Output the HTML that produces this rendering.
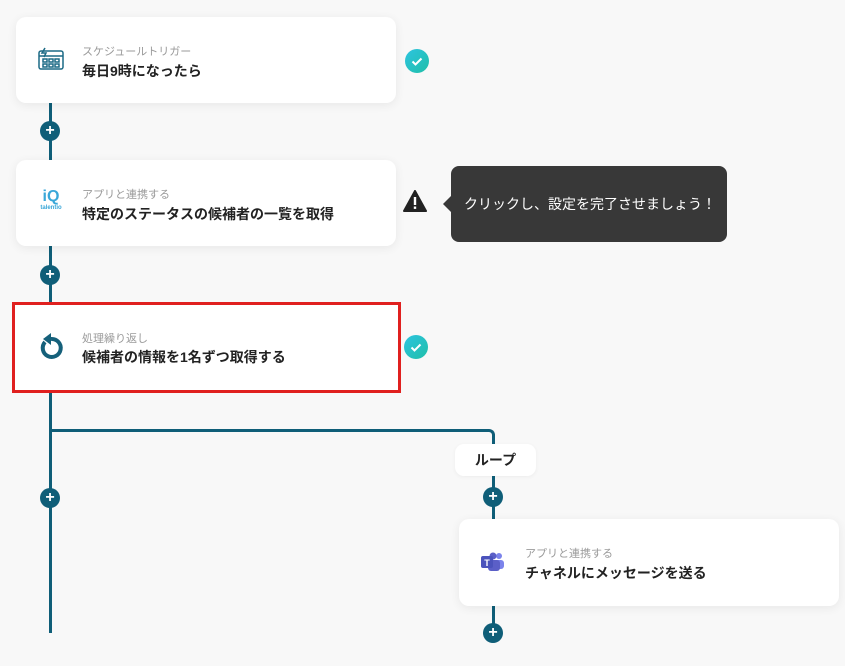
<!DOCTYPE html>
<html><head><meta charset="utf-8"><style>
*{margin:0;padding:0;box-sizing:border-box}
body{width:845px;height:666px;background:#f8f8f8;position:relative;overflow:hidden;font-family:"Liberation Sans","Noto Sans CJK JP",sans-serif}
.ln{position:absolute;background:#0f5e78}
.card{position:absolute;background:#fff;border-radius:10px;box-shadow:0 2px 10px rgba(0,0,0,.07)}
.sub{position:absolute;font-size:11px;color:#9a9a9a}
.ttl{position:absolute;font-size:14px;font-weight:bold;color:#222}
.plus{position:absolute;width:20px;height:20px;border-radius:50%;background:#0f5e78;color:#fff;font-weight:bold;font-size:16px;line-height:20px;text-align:center}
.chk{position:absolute;width:24px;height:24px;border-radius:50%;background:linear-gradient(135deg,#2ec4e0,#1fbfa8)}
</style></head><body>
<div class="ln" style="left:49px;top:100px;width:3px;height:533px"></div>
<div style="position:absolute;left:49px;top:429px;width:446px;height:14px;border-top:3px solid #0f5e78;border-right:3px solid #0f5e78;border-top-right-radius:6px"></div>
<div class="ln" style="left:492px;top:440px;width:3px;height:195px"></div>

<div class="card" style="left:16px;top:17px;width:380px;height:86px"></div>
<svg style="position:absolute;left:38px;top:47px" width="26" height="24" viewBox="0 0 26 24" fill="none" stroke="#1c6a85" stroke-width="1.5"><rect x="1" y="4" width="24" height="18" rx="2"/><line x1="1" y1="9" x2="25" y2="9"/><rect x="5" y="12" width="4" height="3"/><rect x="11" y="12" width="4" height="3"/><rect x="17" y="12" width="4" height="3"/><rect x="5" y="17" width="4" height="3"/><rect x="11" y="17" width="4" height="3"/><rect x="17" y="17" width="4" height="3"/><path d="M7 1 L4 6 L8 6 L6 10"/></svg>
<div class="sub" style="left:82px;top:43px">スケジュールトリガー</div>
<div class="ttl" style="left:82px;top:61px">毎日9時になったら</div>
<div class="chk" style="left:405px;top:49px"><svg width="24" height="24"><path d="M7.5 12.5l3 3 6-6" stroke="#fff" stroke-width="2" fill="none"/></svg></div>

<div class="plus" style="left:40px;top:121px">+</div>

<div class="card" style="left:16px;top:160px;width:380px;height:86px"></div>
<div style="position:absolute;left:38px;top:190px;width:26px;color:#3aa7d8;text-align:center;font-weight:bold;font-size:16px;line-height:14px">iQ<div style="font-size:6px;line-height:8px">talentio</div></div>
<div class="sub" style="left:82px;top:186px">アプリと連携する</div>
<div class="ttl" style="left:82px;top:204px">特定のステータスの候補者の一覧を取得</div>
<svg style="position:absolute;left:403px;top:190px" width="24" height="22"><path d="M12 1 L23 21 L1 21 Z" fill="#222" stroke="#222" stroke-linejoin="round" stroke-width="2"/><rect x="10.8" y="7" width="2.4" height="8" fill="#fff"/><rect x="10.8" y="16.5" width="2.4" height="2.4" fill="#fff"/></svg>
<div style="position:absolute;left:451px;top:166px;width:276px;height:76px;background:#383838;border-radius:8px;color:#fff;font-size:14px;line-height:76px;padding-left:13px">クリックし、設定を完了させましょう！</div>
<div style="position:absolute;left:443px;top:196px;border:8px solid transparent;border-right-color:#383838;border-left:0"></div>

<div class="plus" style="left:40px;top:265px">+</div>

<div style="position:absolute;left:12px;top:302px;width:389px;height:91px;border:3px solid #e0201f;background:#fff"></div>
<svg style="position:absolute;left:38px;top:333px" width="26" height="28" viewBox="0 0 26 28"><path d="M7 9 A9 9 0 1 0 13 6" stroke="#15607a" stroke-width="4" fill="none"/><path d="M13 0 L13 12 L5 6 Z" fill="#15607a"/></svg>
<div class="sub" style="left:82px;top:330px">処理繰り返し</div>
<div class="ttl" style="left:82px;top:347px">候補者の情報を1名ずつ取得する</div>
<div class="chk" style="left:404px;top:335px"><svg width="24" height="24"><path d="M7.5 12.5l3 3 6-6" stroke="#fff" stroke-width="2" fill="none"/></svg></div>

<div style="position:absolute;left:455px;top:444px;width:81px;height:32px;background:#fff;border-radius:9px;font-size:14px;font-weight:bold;color:#222;text-align:center;line-height:32px;box-shadow:0 1px 4px rgba(0,0,0,.05)">ループ</div>

<div class="plus" style="left:40px;top:488px">+</div>
<div class="plus" style="left:483px;top:487px">+</div>

<div class="card" style="left:459px;top:519px;width:380px;height:87px"></div>
<svg style="position:absolute;left:481px;top:552px" width="24" height="20"><circle cx="18" cy="4" r="3" fill="#7b83eb"/><rect x="14" y="8" width="9" height="9" rx="3" fill="#7b83eb"/><circle cx="12" cy="4" r="3.5" fill="#5b5fc7"/><rect x="7" y="8" width="12" height="11" rx="3" fill="#5b5fc7"/><rect x="0" y="4" width="12" height="12" rx="2" fill="#4b53bc"/><text x="6" y="14" font-size="9" font-weight="bold" fill="#fff" text-anchor="middle" font-family="Liberation Sans">T</text></svg>
<div class="sub" style="left:525px;top:545px">アプリと連携する</div>
<div class="ttl" style="left:525px;top:563px">チャネルにメッセージを送る</div>

<div class="plus" style="left:483px;top:623px">+</div>
</body></html>
